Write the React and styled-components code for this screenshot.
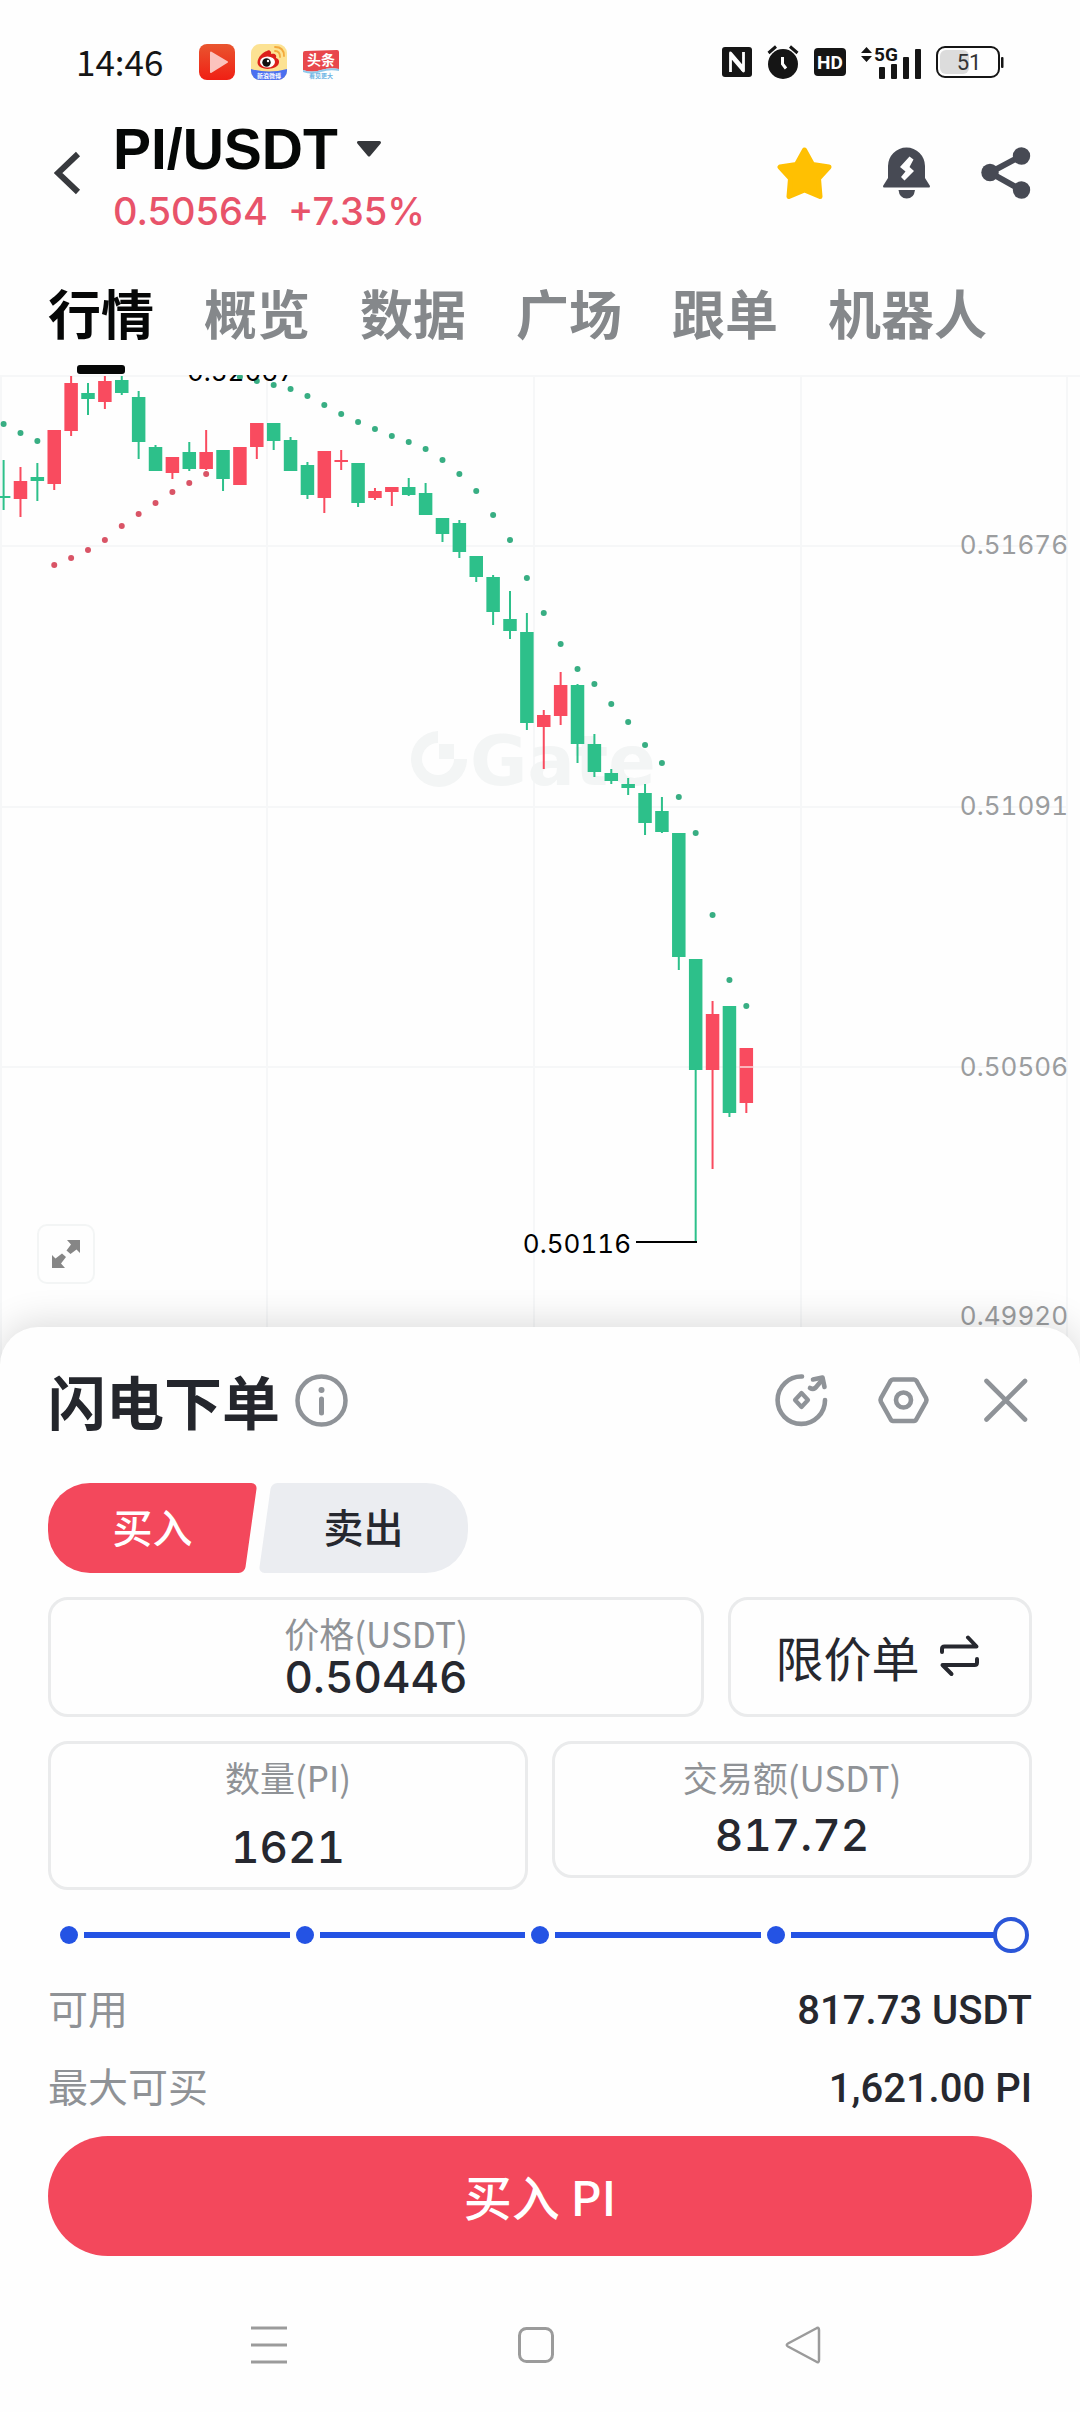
import { useState } from "react"
import styled, { createGlobalStyle } from "styled-components"

const UP = "#f94b5f";
const DOWN = "#2dc08a";

// [direction, high, body top, body bottom, low]
const candles = [
    ["d", 460, 496, 498, 510],
    ["u", 467, 481, 499, 517],
    ["d", 463, 477, 481, 501],
    ["u", 430, 430, 484, 490],
    ["u", 376, 383, 431, 436],
    ["d", 383, 393, 399, 415],
    ["u", 376, 381, 402, 409],
    ["d", 376, 380, 393, 395],
    ["d", 391, 397, 442, 459],
    ["d", 445, 447, 471, 471],
    ["u", 457, 457, 473, 479],
    ["d", 442, 452, 469, 471],
    ["u", 430, 452, 469, 470],
    ["d", 450, 450, 479, 491],
    ["u", 447, 447, 485, 485],
    ["u", 423, 423, 447, 459],
    ["d", 423, 423, 441, 450],
    ["d", 437, 440, 471, 471],
    ["d", 462, 465, 495, 499],
    ["u", 451, 451, 498, 513],
    ["u", 450, 460, 462, 470],
    ["d", 463, 463, 503, 507],
    ["u", 488, 491, 498, 500],
    ["u", 487, 487, 492, 506],
    ["d", 478, 487, 495, 496],
    ["d", 483, 493, 515, 515],
    ["d", 518, 518, 534, 542],
    ["d", 520, 523, 552, 558],
    ["d", 556, 556, 577, 582],
    ["d", 575, 577, 612, 625],
    ["d", 591, 619, 631, 639],
    ["d", 613, 632, 723, 730],
    ["u", 710, 715, 727, 769],
    ["u", 672, 685, 716, 725],
    ["d", 684, 685, 744, 763],
    ["d", 734, 744, 772, 777],
    ["d", 769, 773, 781, 784],
    ["d", 778, 784, 788, 795],
    ["d", 784, 793, 823, 835],
    ["d", 797, 811, 832, 833],
    ["d", 833, 833, 957, 970],
    ["d", 959, 959, 1070, 1242],
    ["u", 1001, 1014, 1070, 1169],
    ["d", 1006, 1006, 1113, 1117],
    ["u", 1048, 1048, 1103, 1113],
];

// parabolic SAR, one value per candle
const sar = [
    424, 433, 441, 565, 558, 550, 540, 526, 514, 503, 492, 483, 474, null, 377,
    381, 385, 389, 396, 405, 414, 422, 429, 436, 442, 449, 460, 474, 491, 515,
    540, 578, 613, 644, 669, 684, 704, 722, 745, 763, 797, 833, 915, 980, 1006,
];

const candleX = (i) => 3.6 + i * 16.88;

const axisLabels = [
    { value: "0.51676", y: 554 },
    { value: "0.51091", y: 815 },
    { value: "0.50506", y: 1076 },
    { value: "0.49920", y: 1325 },
];

const tabs = ["行情", "概览", "数据", "广场", "跟单", "机器人"];

function PlayAppIcon() {
    return (
        <svg width="36" height="36" viewBox="0 0 36 36">
            <defs>
                <linearGradient id="play" x1="0" y1="0" x2="0" y2="1">
                    <stop offset="0" stopColor="#e9552f" />
                    <stop offset="1" stopColor="#f01f14" />
                </linearGradient>
            </defs>
            <rect width="36" height="36" rx="8" fill="url(#play)" />
            <path d="M12 8.500 L28 18 L12 28 Z" fill="#fbc3bd" stroke="#fbc3bd" strokeWidth="2" strokeLinejoin="round" />
        </svg>
    );
}

function WeiboAppIcon() {
    return (
        <svg width="36" height="36" viewBox="0 0 36 36">
            <defs>
                <clipPath id="weiboTile"><rect width="36" height="36" rx="9" /></clipPath>
            </defs>
            <g clipPath="url(#weiboTile)">
                <rect width="36" height="36" fill="#fce293" />
                <path d="M0 25 Q18 30 36 25 V36 H0 Z" fill="#4a6ff0" />
                <path d="M6.500 19 C6.500 13 12 8 16 7 C18 5 21 8 20 10 C24 9 26 11 25 14 C29 15 28.500 19 27 21 C24 26 8 27 6.500 19 Z" fill="#dc1f1a" />
                <ellipse cx="16.500" cy="18" rx="7.500" ry="5.500" fill="#fff" />
                <circle cx="15.500" cy="18.500" r="4.200" fill="#111" />
                <circle cx="17" cy="17" r="1.200" fill="#fff" />
                <path d="M24 7 Q29 7 29 13 M24 3 Q33 3 33 12" fill="none" stroke="#f3a93c" strokeWidth="1.800" strokeLinecap="round" />
                <text x="18" y="34" textAnchor="middle" fontSize="6" fontWeight="700" fill="#fff">新浪微博</text>
            </g>
        </svg>
    );
}

function ToutiaoAppIcon() {
    return (
        <svg width="36" height="36" viewBox="0 0 36 36">
            <path d="M0 9 Q0 7 2 7 L34 6 Q36 6 36 8 V25 Q27 23 18 26 Q9 29 0 26 Z" fill="#e8474c" />
            <path d="M0 26 Q9 29 18 26 Q27 23 36 25 V27 Q27 25 18 28 Q9 31 0 28 Z" fill="#8fc8ea" />
            <text x="18" y="21" textAnchor="middle" fontSize="14" fontWeight="700" fill="#fff">头条</text>
            <text x="18" y="34" textAnchor="middle" fontSize="6" fontWeight="700" fill="#6db4e4">看见更大</text>
        </svg>
    );
}

function NfcIcon() {
    return (
        <svg width="30" height="30" viewBox="0 0 30 30">
            <rect width="30" height="30" rx="3" fill="#151515" />
            <path d="M8.500 25 V6 L20.500 20 V24 M21.500 5 V24 L9.500 10" fill="none" stroke="#fefefe" strokeWidth="2.800" strokeLinejoin="round" />
        </svg>
    );
}

function AlarmIcon() {
    return (
        <svg width="32" height="34" viewBox="0 0 32 34">
            <circle cx="16" cy="19" r="15" fill="#151515" />
            <path d="M1.500 8 L9 1.500 M30.500 8 L23 1.500" stroke="#151515" strokeWidth="3" />
            <path d="M15.500 12 V19 L19 23.500" fill="none" stroke="#fefefe" strokeWidth="3" />
        </svg>
    );
}

function HdIcon() {
    return (
        <svg width="32" height="28" viewBox="0 0 32 28">
            <rect width="32" height="28" rx="4" fill="#151515" />
            <text x="16" y="21" textAnchor="middle" fontFamily="Roboto, sans-serif" fontSize="19" fontWeight="700" fill="#fefefe">HD</text>
        </svg>
    );
}

function SignalIcon() {
    return (
        <svg width="60" height="38" viewBox="0 -3 60 38">
            <path d="M0 7 L5.500 1 L11 7 Z M0 10 H11 L5.500 16 Z" fill="#151515" />
            <text x="13" y="15" fontFamily="Roboto, sans-serif" fontSize="19" fontWeight="700" fill="#151515">5G</text>
            <rect x="18" y="21" width="6" height="12" rx="1" fill="#151515" />
            <rect x="30" y="18" width="6" height="15" rx="1" fill="#151515" />
            <rect x="42" y="11" width="6" height="22" rx="1" fill="#151515" />
            <rect x="54" y="3" width="6" height="30" rx="1" fill="#151515" />
        </svg>
    );
}

function BatteryIcon() {
    return (
        <svg width="68" height="32" viewBox="0 0 68 32">
            <rect x="4" y="4" width="29" height="24" rx="6" fill="#dcdcdc" />
            <rect x="1" y="1" width="62" height="30" rx="8" fill="none" stroke="#151515" strokeWidth="2" />
            <rect x="65" y="11" width="2.500" height="11" rx="1" fill="#151515" />
            <text x="33" y="24" textAnchor="middle" fontFamily="Roboto, sans-serif" fontSize="22" fill="#333">51</text>
        </svg>
    );
}

function BackIcon() {
    return (
        <svg width="27" height="44" viewBox="0 0 27 44">
            <path d="M24 3 L4 22 L24 41" fill="none" stroke="#37393d" strokeWidth="6" strokeLinejoin="miter" />
        </svg>
    );
}

function StarIcon() {
    return (
        <svg width="55" height="53" viewBox="0 0 55 53">
            <path
                d="M27.500 3 L35.500 17.500 L52 20 L41.500 31.500 L43 49.500 L27.500 43 L12 49.500 L13.500 31.500 L3 20 L19.500 17.500 Z"
                fill="#ffc002" stroke="#ffc002" strokeWidth="5" strokeLinejoin="round"
            />
        </svg>
    );
}

function BellIcon() {
    return (
        <svg width="47" height="52" viewBox="0 0 47 52">
            <path d="M5 19 A18.500 18.500 0 0 1 42 19 V31 L47 39 Q47 40.500 46 40.500 H1 Q0 40.500 0 39 L5 31 Z" fill="#474a54" />
            <path d="M15.500 43 H32 Q31 51.500 23.700 51.500 Q16.500 51.500 15.500 43 Z" fill="#474a54" />
            <path d="M26.500 9.500 L30.500 12.500 L26.500 20 L31 24 L21.500 33.500 L18 30 L22.500 24.500 L17 20 Z" fill="#fefefe" />
        </svg>
    );
}

function ShareIcon() {
    return (
        <svg width="50" height="52" viewBox="0 0 50 52">
            <path d="M40 9 L9 25.500 L40 43" fill="none" stroke="#474a54" strokeWidth="6" />
            <circle cx="9" cy="25.500" r="8.700" fill="#474a54" />
            <circle cx="40.500" cy="9" r="8.700" fill="#474a54" />
            <circle cx="40.500" cy="43" r="8.700" fill="#474a54" />
        </svg>
    );
}

function ExpandIcon() {
    return (
        <svg width="28" height="28" viewBox="0 0 28 28" fill="#868686">
            <path d="M15 0 H28 V13 L24.500 9.500 L18.500 14 L14.500 10.500 L19 4.500 Z" />
            <path d="M13 28 H0 V15 L3.500 18.500 L10 13.500 L14 17 L9 23.500 Z" />
        </svg>
    );
}

function InfoIcon() {
    return (
        <svg width="53" height="53" viewBox="0 0 53 53">
            <circle cx="26.500" cy="26.500" r="24" fill="none" stroke="#8f9398" strokeWidth="4.500" />
            <circle cx="26.500" cy="16" r="3" fill="#8f9398" />
            <path d="M26.500 25 V39" stroke="#8f9398" strokeWidth="5" strokeLinecap="round" />
        </svg>
    );
}

function ConvertIcon() {
    return (
        <svg width="53" height="53" viewBox="0 0 53 53" fill="none" stroke="#8f9398" strokeWidth="4.600" strokeLinecap="round" strokeLinejoin="round">
            <path d="M27 2.500 A23.700 23.700 0 1 0 50 26" />
            <path d="M26.500 19 L33 26 L26.500 33 L20 26 Z" strokeWidth="4.200" />
            <path d="M35 14 Q39 16.500 42 12 L47 6" />
            <path d="M38 5.500 L47.500 3.500 L49.500 13" />
        </svg>
    );
}

function HexIcon() {
    return (
        <svg width="53" height="53" viewBox="0 0 53 53" fill="none" stroke="#8f9398" strokeWidth="4.600" strokeLinejoin="round">
            <path d="M16 5.500 H37 Q38.500 5.500 39.500 7 L49 24 Q50 26 49 28 L39.500 45 Q38.500 47 37 47 H16 Q14.500 47 13.500 45 L4 28 Q3 26 4 24 L13.500 7 Q14.500 5.500 16 5.500 Z" />
            <circle cx="26.500" cy="26" r="7.500" />
        </svg>
    );
}

function CloseIcon() {
    return (
        <svg width="53" height="53" viewBox="0 0 53 53">
            <path d="M7.500 7 L46 45.500 M46 7 L7.500 45.500" stroke="#8f9398" strokeWidth="4.600" strokeLinecap="round" />
        </svg>
    );
}

function SwapIcon() {
    return (
        <svg width="39" height="42" viewBox="0 0 39 42" fill="none" stroke="#26282f" strokeWidth="4" strokeLinecap="round" strokeLinejoin="round">
            <path d="M2 17 V14 Q2 11.500 4.500 11.500 H36.500 L28 2.500" />
            <path d="M37 24 V27.500 Q37 30 34.500 30 H2.500 L11.500 39" />
        </svg>
    );
}

function Chart() {
    return (
        <ChartSvg viewBox="0 375 1080 992">
            <g stroke="#f6f7f8" strokeWidth="2">
                <path d="M1 375 V1367 M267 375 V1367 M534 375 V1367 M801 375 V1367 M1067 375 V1367" />
                <path d="M0 376 H1080 M0 546 H1068 M0 807 H1068 M0 1067 H1068" />
            </g>
            <g fill="#f3f5f5">
                <path d="M438 731 A28 28 0 1 0 467 759 H454 A16 16 0 1 1 438 743 Z" />
                <rect x="439" y="744" width="15" height="15" />
                <text x="470" y="785" fontFamily="DejaVu Sans, sans-serif" fontSize="70" fontWeight="700">Gate</text>
            </g>
            {candles.map(([dir, high, top, bottom, low], i) => (
                <g key={i} fill={dir === "u" ? UP : DOWN}>
                    <rect x={candleX(i) - 1} y={high} width="2" height={low - high} />
                    <rect x={candleX(i) - 6.75} y={top} width="13.5" height={bottom - top} />
                </g>
            ))}
            <path d="M739 1067 H753" stroke="#fbb3ba" strokeWidth="2" />
            {sar.map((y, i) => y && (
                <circle key={i} cx={candleX(i)} cy={y} r="3" fill={i > 2 && i < 13 ? "#d95466" : "#38ae83"} />
            ))}
            <path d="M636 1242 H697" stroke="#000" strokeWidth="2" />
            <PriceText x="241" y="381" textAnchor="middle">0.52067</PriceText>
            <PriceText x="631" y="1253" textAnchor="end">0.50116</PriceText>
            {axisLabels.map((label) => (
                <AxisText key={label.value} x="1068" y={label.y} textAnchor="end">{label.value}</AxisText>
            ))}
        </ChartSvg>
    );
}

function Field({ id, label, defaultValue, gap, bottom }) {
    return (
        <FieldBox $gap={gap} $bottom={bottom}>
            <label htmlFor={id}>{label}</label>
            <input id={id} defaultValue={defaultValue} inputMode="decimal" />
        </FieldBox>
    );
}

export default function App() {
    const [activeTab, setActiveTab] = useState("行情");
    const [percent, setPercent] = useState(100);

    return (
        <>
            <GlobalStyle />
            <StatusBar>
                <StatusGroup $gap={16}>
                    <Clock>14:46</Clock>
                    <PlayAppIcon />
                    <WeiboAppIcon />
                    <ToutiaoAppIcon />
                </StatusGroup>
                <StatusGroup $gap={15}>
                    <NfcIcon />
                    <AlarmIcon />
                    <HdIcon />
                    <SignalIcon />
                    <BatteryIcon />
                </StatusGroup>
            </StatusBar>

            <Header>
                <IconButton aria-label="返回"><BackIcon /></IconButton>
                <Pair>
                    <PairName>
                        PI/USDT
                        <svg width="26" height="18" viewBox="0 0 26 18">
                            <path d="M2.500 2.500 H23.500 L13 15 Z" fill="#35373b" stroke="#35373b" strokeWidth="3" strokeLinejoin="round" />
                        </svg>
                    </PairName>
                    <PairPrice>
                        <span>0.50564</span>
                        <span>+7.35%</span>
                    </PairPrice>
                </Pair>
                <HeaderActions>
                    <IconButton aria-label="收藏"><StarIcon /></IconButton>
                    <IconButton aria-label="提醒"><BellIcon /></IconButton>
                    <IconButton aria-label="分享"><ShareIcon /></IconButton>
                </HeaderActions>
            </Header>

            <Tabs>
                {tabs.map((tab) => (
                    <Tab key={tab} $active={tab === activeTab} onClick={() => setActiveTab(tab)}>{tab}</Tab>
                ))}
            </Tabs>

            <ChartArea>
                <Chart />
                <ExpandButton aria-label="全屏"><ExpandIcon /></ExpandButton>
            </ChartArea>

            <OrderPanel>
                <PanelHeader>
                    <PanelTitle>闪电下单</PanelTitle>
                    <InfoIcon />
                    <PanelActions>
                        <IconButton aria-label="转换"><ConvertIcon /></IconButton>
                        <IconButton aria-label="设置"><HexIcon /></IconButton>
                        <IconButton aria-label="关闭"><CloseIcon /></IconButton>
                    </PanelActions>
                </PanelHeader>

                <SideSwitch>
                    <BuySide>买入</BuySide>
                    <SellSide>卖出</SellSide>
                </SideSwitch>

                <PriceRow>
                    <Field id="price" label="价格(USDT)" defaultValue="0.50446" gap={0} bottom={14} />
                    <OrderType>
                        限价单
                        <SwapIcon />
                    </OrderType>
                </PriceRow>
                <AmountRow>
                    <Field id="amount" label="数量(PI)" defaultValue="1621" gap={26} bottom={17} />
                    <Field id="total" label="交易额(USDT)" defaultValue="817.72" gap={14} bottom={17} />
                </AmountRow>

                <Slider>
                    <SliderTrack>
                        <Stop /><Segment /><Stop /><Segment /><Stop /><Segment /><Stop /><Segment /><Stop />
                    </SliderTrack>
                    <SliderInput
                        type="range"
                        min="0"
                        max="100"
                        value={percent}
                        aria-label="仓位"
                        onChange={(e) => setPercent(Number(e.target.value))}
                    />
                </Slider>

                <InfoRow>
                    <InfoLabel>可用</InfoLabel>
                    <InfoValue>817.73 USDT</InfoValue>
                </InfoRow>
                <InfoRow>
                    <InfoLabel>最大可买</InfoLabel>
                    <InfoValue>1,621.00 PI</InfoValue>
                </InfoRow>

                <SubmitButton>买入 PI</SubmitButton>
            </OrderPanel>

            <NavBar>
                <IconButton aria-label="菜单">
                    <svg width="36" height="38" viewBox="0 0 36 38">
                        <path d="M0 2 H36 M0 19 H36 M0 36 H36" stroke="#9b9b9b" strokeWidth="3" />
                    </svg>
                </IconButton>
                <IconButton aria-label="主页">
                    <svg width="36" height="38" viewBox="0 0 36 38">
                        <rect x="1.500" y="2.500" width="33" height="33" rx="7" fill="none" stroke="#9b9b9b" strokeWidth="3" />
                    </svg>
                </IconButton>
                <IconButton aria-label="后退">
                    <svg width="36" height="38" viewBox="0 0 36 38">
                        <path d="M31 2.500 Q34 0.500 34 4 V34 Q34 37.500 31 35.500 L3 20.500 Q0.500 19 3 17.500 Z" fill="none" stroke="#9b9b9b" strokeWidth="2.500" />
                    </svg>
                </IconButton>
            </NavBar>
        </>
    );
}

const GlobalStyle = createGlobalStyle`
    * {
        box-sizing: border-box;
    }

    body {
        margin: 0;
        background: #fefefe;
        color: #26282f;
        font-family: "Noto Sans CJK SC", sans-serif;
    }

    button, input {
        border: 0;
        padding: 0;
        margin: 0;
        background: none;
        color: inherit;
        font-family: inherit;
    }

    svg {
        display: block;
        flex: none;
    }
`;

const StatusBar = styled.div`
    display: flex;
    justify-content: space-between;
    align-items: center;
    height: 124px;
    padding: 0 76px;
`;

const StatusGroup = styled.div`
    display: flex;
    align-items: center;
    gap: ${({ $gap }) => $gap}px;
`;

const Clock = styled.span`
    color: #151515;
    font-size: 35px;
    line-height: 40px;
    margin-right: 20px;
    padding-bottom: 3px;
`;

const Header = styled.header`
    display: flex;
    height: 98px;
    padding: 0 49px 0 54px;
`;

const IconButton = styled.button`
    display: flex;
    align-items: center;
    justify-content: center;
`;

const Pair = styled.div`
    flex: 1;
    padding-left: 32px;
`;

const PairName = styled.div`
    display: flex;
    align-items: center;
    gap: 18px;
    color: #050706;
    font-family: "Liberation Sans", sans-serif;
    font-size: 57px;
    font-weight: 700;
    line-height: 50px;
`;

const PairPrice = styled.div`
    display: flex;
    gap: 20px;
    margin-top: 13px;
    color: #e8536a;
    font-family: Inter, sans-serif;
    font-size: 38px;
    font-weight: 500;
    line-height: 48px;
`;

const HeaderActions = styled.div`
    display: flex;
    gap: 51px;
`;

const Tabs = styled.nav`
    display: flex;
    gap: 50px;
    padding: 55px 48px 1px;
`;

const Tab = styled.button`
    display: flex;
    flex-direction: column;
    align-items: center;
    color: ${({ $active }) => ($active ? "#060707" : "#85888b")};
    font-size: 53px;
    font-weight: 700;
    line-height: 70px;

    &::after {
        content: "";
        width: 48px;
        height: 9px;
        margin-top: 18px;
        border-radius: 3px;
        background: ${({ $active }) => ($active ? "#060707" : "transparent")};
    }
`;

const ChartArea = styled.section`
    position: relative;
`;

const ChartSvg = styled.svg`
    width: 100%;
    height: auto;
`;

const PriceText = styled.text`
    fill: #000;
    font-family: Inter, sans-serif;
    font-variant-numeric: tabular-nums;
    font-size: 26px;
`;

const AxisText = styled(PriceText)`
    fill: #9b9d9f;
`;

const ExpandButton = styled.button`
    position: absolute;
    left: 37px;
    bottom: 83px;
    display: flex;
    align-items: center;
    justify-content: center;
    width: 58px;
    height: 60px;
    border: 2px solid #f3f5f5;
    border-radius: 10px;
    background: #fefefe;
`;

const OrderPanel = styled.section`
    position: relative;
    margin-top: -40px;
    padding: 43px 48px 0;
    border-radius: 38px 38px 0 0;
    background: #fefefe;
    box-shadow: 0 -4px 36px rgba(0, 0, 0, 0.14);
    clip-path: inset(-60px 0 0 0);
`;

const PanelHeader = styled.div`
    display: flex;
    align-items: center;
    gap: 15px;
    height: 60px;
`;

const PanelTitle = styled.h2`
    margin: 0;
    color: #24262c;
    font-size: 58px;
    font-weight: 700;
    line-height: 60px;
`;

const PanelActions = styled.div`
    display: flex;
    gap: 49px;
    margin-left: auto;
`;

const SideSwitch = styled.div`
    display: flex;
    gap: 2px;
    margin-top: 53px;
`;

const SideButton = styled.button`
    position: relative;
    z-index: 0;
    overflow: hidden;
    width: 209px;
    height: 90px;
    padding-bottom: 4px;
    font-size: 40px;
    font-weight: 500;

    &::before {
        content: "";
        position: absolute;
        z-index: -1;
        top: 0;
        bottom: 0;
        border-radius: 6px;
        transform: skewX(-8deg);
    }
`;

const BuySide = styled(SideButton)`
    border-radius: 42px 0 0 42px;
    color: #fff;

    &::before {
        left: -20px;
        right: 6px;
        background: #f3485c;
    }
`;

const SellSide = styled(SideButton)`
    border-radius: 0 42px 42px 0;

    &::before {
        left: 6px;
        right: -20px;
        background: #ebedf1;
    }
`;

const PriceRow = styled.div`
    display: grid;
    grid-template-columns: 1fr 304px;
    gap: 24px;
    margin-top: 24px;
`;

const AmountRow = styled.div`
    display: grid;
    grid-template-columns: 1fr 1fr;
    align-items: start;
    gap: 24px;
    margin-top: 24px;
`;

const FieldBox = styled.div`
    display: flex;
    flex-direction: column;
    align-items: center;
    gap: ${({ $gap }) => $gap}px;
    padding: 14px 20px ${({ $bottom }) => $bottom}px;
    border: 3px solid #eaebec;
    border-radius: 20px;

    label {
        padding-bottom: 2px;
        color: #8f9296;
        font-size: 35px;
        line-height: 38px;
    }

    input {
        width: 100%;
        height: 46px;
        text-align: center;
        font-family: Inter, sans-serif;
        font-variant-numeric: tabular-nums;
        font-size: 44px;
        font-weight: 500;
        outline: none;
    }
`;

const OrderType = styled.button`
    display: flex;
    align-items: center;
    justify-content: center;
    gap: 20px;
    padding: 0 6px 2px 0;
    border: 3px solid #eaebec;
    border-radius: 20px;
    font-size: 48px;
    line-height: 60px;
`;

const Slider = styled.div`
    position: relative;
    margin: 27px 3px 18px;
`;

const SliderTrack = styled.div`
    display: flex;
    align-items: center;
    gap: 6px;
    height: 36px;
    padding: 0 9px;
`;

const Stop = styled.span`
    width: 18px;
    height: 18px;
    border-radius: 50%;
    background: #2453e4;
`;

const Segment = styled.span`
    flex: 1;
    height: 6px;
    background: #2453e4;
`;

const SliderInput = styled.input`
    position: absolute;
    inset: 0;
    width: 100%;
    height: 36px;
    appearance: none;

    &::-webkit-slider-thumb {
        appearance: none;
        width: 36px;
        height: 36px;
        border: 4px solid #2b56d8;
        border-radius: 50%;
        background: #fefefe;
    }
`;

const InfoRow = styled.div`
    display: flex;
    justify-content: space-between;
    align-items: center;
    height: 78px;
`;

const InfoLabel = styled.span`
    padding-bottom: 6px;
    color: #8f9296;
    font-size: 40px;
`;

const InfoValue = styled.span`
    font-family: Roboto, sans-serif;
    font-size: 40px;
    font-weight: 500;
`;

const SubmitButton = styled.button`
    width: 100%;
    height: 120px;
    margin-top: 9px;
    padding-bottom: 3px;
    border-radius: 60px;
    background: #f3485c;
    color: #fff;
    font-size: 48px;
    font-weight: 500;
`;

const NavBar = styled.nav`
    display: grid;
    grid-template-columns: repeat(3, 1fr);
    padding: 70px 144px 48px 135px;
`;
